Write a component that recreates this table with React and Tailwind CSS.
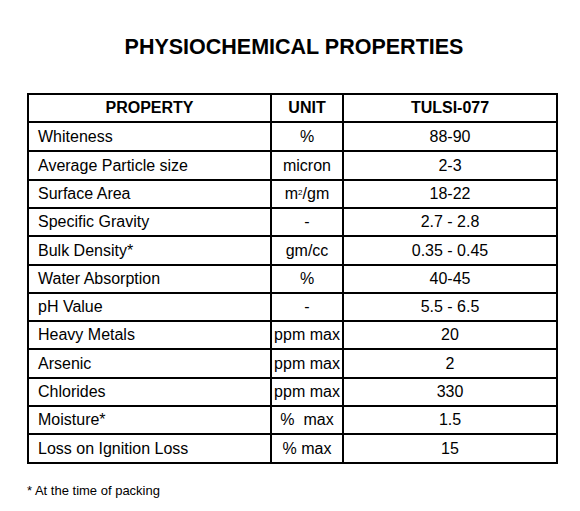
export default function App() {
  const rows = [
    { name: "Whiteness", unit: "%", value: "88-90", h: "h-[29px]" },
    { name: "Average Particle size", unit: "micron", value: "2-3", h: "h-[29px]" },
    { name: "Surface Area", unit: <>m<sup className="text-[8px]">2</sup>/gm</>, value: "18-22", h: "h-[28px]" },
    { name: "Specific Gravity", unit: "-", value: "2.7 - 2.8", h: "h-[28px]" },
    { name: "Bulk Density*", unit: "gm/cc", value: "0.35 - 0.45", h: "h-[29px]" },
    { name: "Water Absorption", unit: "%", value: "40-45", h: "h-[28px]" },
    { name: "pH Value", unit: "-", value: "5.5 - 6.5", h: "h-[28px]" },
    { name: "Heavy Metals", unit: "ppm max", value: "20", h: "h-[28px]" },
    { name: "Arsenic", unit: "ppm max", value: "2", h: "h-[29px]" },
    { name: "Chlorides", unit: "ppm max", value: "330", h: "h-[28px]" },
    { name: "Moisture*", unit: "%\u00a0\u00a0max", value: "1.5", h: "h-[28px]" },
    { name: "Loss on Ignition Loss", unit: "% max", value: "15", h: "h-[29px]" },
  ];

  return (
    <div className="min-h-screen bg-white text-black font-['Liberation_Sans',Arial,sans-serif]">
      <h1 className="pt-[35px] text-center text-[21.5px] leading-[24px] font-bold pl-[8px]">
        PHYSIOCHEMICAL PROPERTIES
      </h1>

      <table className="ml-[27px] mt-[34px] w-[529px] border-collapse table-fixed text-[16px]">
        <colgroup>
          <col className="w-[243px]" />
          <col className="w-[72px]" />
          <col className="w-[214px]" />
        </colgroup>
        <thead>
          <tr className="h-[28px] font-bold">
            <th className="border-2 border-black text-center">PROPERTY</th>
            <th className="border-2 border-black text-center">UNIT</th>
            <th className="border-2 border-black text-center">TULSI-077</th>
          </tr>
        </thead>
        <tbody>
          {rows.map((r) => (
            <tr key={r.name} className={r.h}>
              <td className="border-2 border-black pl-[9px] leading-[18px]">{r.name}</td>
              <td className="border-2 border-black text-center whitespace-nowrap leading-[18px]">{r.unit}</td>
              <td className="border-2 border-black text-center leading-[18px]">{r.value}</td>
            </tr>
          ))}
        </tbody>
      </table>

      <p className="ml-[27px] mt-[17px] text-[13px]">* At the time of packing</p>
    </div>
  );
}
